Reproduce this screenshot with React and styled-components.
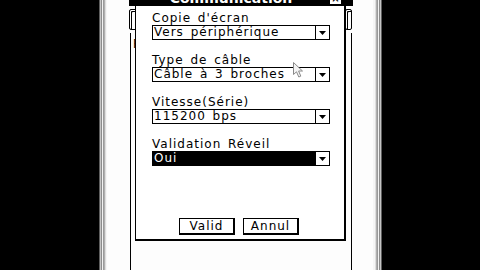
import React from 'react';
import styled, { createGlobalStyle } from 'styled-components';

const Global = createGlobalStyle`
  html, body { margin: 0; padding: 0; background: #000; overflow: hidden; }
  #root { width: 480px; height: 270px; }
`;

const Page = styled.div`
  display: flex;
  width: 480px;
  height: 270px;
  background: #000;
  overflow: hidden;
`;

const Black = styled.div`
  flex: 0 0 ${p => p.$w}px;
  background: #000;
`;

const Bezel = styled.div`
  flex: 0 0 ${p => p.$w}px;
  background: linear-gradient(
    to ${p => p.$dir},
    #5e5e5e 0 1px,
    #c4c4c4 1px 2px,
    #8c8c8c 2px 3px,
    #f2f2f2 3px 4px,
    #9a9a9a 4px 5px,
    #b0b0b0 5px 6px,
    #dedede 6px 7px,
    #f6f6f6 7px 100%
  );
`;

const Screen = styled.div`
  flex: 0 0 266px;
  box-sizing: border-box;
  background: #fdfdfd;
  padding-left: 22px;
  display: flex;
`;

const BgWindow = styled.div`
  position: relative;
  width: 224px;
  height: 270px;
  display: flex;
  flex-direction: column;
`;

const BgTitle = styled.div`
  height: 6px;
  background: #000;
`;

const BgToolbar = styled.div`
  height: 27px;
  box-sizing: border-box;
  padding: 3px 1px 3px 0;
  display: flex;
  justify-content: space-between;
`;

const BgTool = styled.div`
  width: ${p => p.$w}px;
  box-sizing: border-box;
  border: 1px solid #000;
  border-radius: 2px;
  box-shadow: inset 1px 1px 0 #fff, inset 2px 2px 0 #000;
`;

const BgList = styled.div`
  flex: 1;
  margin: 0 1px;
  border-left: 1px solid #000;
  border-right: 1px solid #000;
  padding: 4px 2px;
  font: 12px "DejaVu Sans", sans-serif;
  line-height: 14px;
  color: #000;
`;

const Dialog = styled.div`
  position: absolute;
  left: 6px;
  top: -10px;
  width: 211px;
  height: 251px;
  box-sizing: border-box;
  border-style: solid;
  border-color: #000;
  border-width: 1px 2px 2px 1px;
  background: #fff;
  display: flex;
  flex-direction: column;
`;

const TitleBar = styled.div`
  height: 15px;
  flex: 0 0 15px;
  background: #000;
  display: flex;
`;

const Title = styled.div`
  flex: 1;
  text-align: center;
  color: #fff;
  font: bold 14px "DejaVu Sans", sans-serif;
  line-height: 15px;
  white-space: nowrap;
`;

const Close = styled.div`
  align-self: flex-end;
  width: 13px;
  height: 12px;
  margin: 0 2px 1px 3px;
  box-sizing: border-box;
  border: 1px solid #000;
  background: #fff;
  color: #000;
  font: bold 10px "DejaVu Sans", sans-serif;
  line-height: 10px;
  text-align: center;
`;

const Body = styled.div`
  flex: 1;
  display: flex;
  flex-direction: column;
  padding: 5px 14px 4px 16px;
`;

const Field = styled.div`
  display: flex;
  flex-direction: column;
  & + & { margin-top: 13px; }
`;

const Label = styled.div`
  font: 12px "DejaVu Sans", sans-serif;
  line-height: 14px;
  letter-spacing: 1px;
  word-spacing: 2px;
  color: #000;
  white-space: nowrap;
`;

const Select = styled.div`
  display: flex;
  height: 15px;
  box-sizing: border-box;
  border: 1px solid #000;
  background: ${p => (p.$active ? '#000' : '#fff')};
  color: ${p => (p.$active ? '#fff' : '#000')};
`;

const SelectText = styled.div`
  flex: 1;
  padding-left: 1px;
  font: 12px "DejaVu Sans", sans-serif;
  line-height: 13px;
  letter-spacing: 1px;
  word-spacing: 2px;
  white-space: nowrap;
  overflow: hidden;
`;

const ArrowBox = styled.div`
  flex: 0 0 14px;
  box-sizing: border-box;
  border-left: 1px solid #000;
  background: #fff;
  display: flex;
  align-items: center;
  justify-content: center;
`;

const ButtonRow = styled.div`
  margin-top: auto;
  display: flex;
  justify-content: center;
  gap: 8px;
  padding-right: 4px;
`;

const Button = styled.div`
  width: 56px;
  height: 17px;
  box-sizing: border-box;
  border-style: solid;
  border-color: #000;
  border-width: 1px 2px 2px 1px;
  background: #fff;
  font: 12px "DejaVu Sans", sans-serif;
  line-height: 14px;
  letter-spacing: 1px;
  text-align: center;
  color: #000;
`;

const Pointer = styled.svg`
  position: absolute;
  left: 157px;
  top: 71px;
`;

const Arrow = () => (
  <svg width="7" height="4" viewBox="0 0 7 4">
    <path d="M0 0 H7 L3.5 4 Z" fill="#000" />
  </svg>
);

const fields = [
  { label: "Copie d'écran", value: 'Vers périphérique' },
  { label: 'Type de câble', value: 'Câble à 3 broches' },
  { label: 'Vitesse(Série)', value: '115200 bps' },
  { label: 'Validation Réveil', value: 'Oui', active: true },
];

export default function App() {
  return (
    <>
      <Global />
      <Page>
        <Black $w={99} />
        <Bezel $w={8} $dir="right" />
        <Screen>
          <BgWindow>
            <BgTitle />
            <BgToolbar>
              <BgTool $w={22} />
              <BgTool $w={7} />
            </BgToolbar>
            <BgList>F</BgList>
            <Dialog>
              <TitleBar>
                <Title>Communication</Title>
                <Close>×</Close>
              </TitleBar>
              <Body>
                {fields.map(f => (
                  <Field key={f.label}>
                    <Label>{f.label}</Label>
                    <Select $active={f.active}>
                      <SelectText>{f.value}</SelectText>
                      <ArrowBox><Arrow /></ArrowBox>
                    </Select>
                  </Field>
                ))}
                <ButtonRow>
                  <Button>Valid</Button>
                  <Button>Annul</Button>
                </ButtonRow>
              </Body>
              <Pointer width="11" height="16" viewBox="0 0 11 16">
                <path d="M0.5 0.5 V12.5 L3.5 9.8 L5.8 15 L7.8 14.1 L5.6 9 H9.5 Z" fill="#f4f4f4" stroke="#8a8a8a" strokeWidth="1" />
              </Pointer>
            </Dialog>
          </BgWindow>
        </Screen>
        <Bezel $w={9} $dir="left" />
        <Black $w={98} />
      </Page>
    </>
  );
}
